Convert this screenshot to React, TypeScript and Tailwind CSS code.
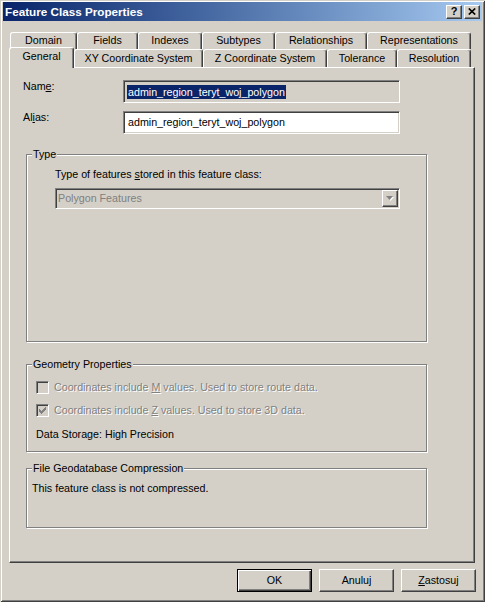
import React from 'react';

const raised =
  'border border-t-white border-l-white border-r-[#404040] border-b-[#404040] shadow-[inset_-1px_-1px_0_#808080]';
const sunken =
  'border border-t-[#808080] border-l-[#808080] border-r-white border-b-white shadow-[inset_1px_1px_0_#404040,inset_-1px_-1px_0_#d4d0c8]';
const dimText = 'text-[#808080] [text-shadow:1px_1px_0_#fff]';

const tabBase =
  'flex shrink-0 items-center justify-center rounded-t-[3px] border-t border-l border-r border-t-white border-l-white border-r-[#404040] bg-[#d4d0c8] shadow-[inset_-1px_0_0_#808080]';

function Tab({ label, className }: { label: React.ReactNode; className: string }) {
  return <div className={`${tabBase} ${className}`}>{label}</div>;
}

function GroupBox({ title, className, children }: { title: string; className: string; children?: React.ReactNode }) {
  return (
    <div className={`ml-[16px] flex w-[401px] shrink-0 flex-col border border-[#808080] shadow-[1px_1px_0_#fff,inset_1px_1px_0_#fff] ${className}`}>
      <span className="-mt-[7px] ml-[5px] self-start bg-[#d4d0c8] px-[1px] leading-[13px]">{title}</span>
      {children}
    </div>
  );
}

function CheckBox({ checked }: { checked?: boolean }) {
  return (
    <div className={`flex h-[13px] w-[13px] shrink-0 items-center justify-center bg-[#d4d0c8] ${sunken}`}>
      {checked && (
        <svg width="7" height="7" viewBox="0 0 7 7">
          <path d="M0 2h1v1h1v1h1v-1h1v-1h1v-1h1v-1h1v3h-1v1h-1v1h-1v1h-1v1h-1v-1h-1v-1h-1z" fill="#808080" />
        </svg>
      )}
    </div>
  );
}

function Button({ children, isDefault }: { children: React.ReactNode; isDefault?: boolean }) {
  return (
    <div
      className={`flex h-[23px] w-[75px] items-center justify-center ${
        isDefault
          ? 'border border-black shadow-[inset_1px_1px_0_#fff,inset_-1px_-1px_0_#404040,inset_-2px_-2px_0_#808080]'
          : raised
      }`}
    >
      {children}
    </div>
  );
}

export default function App() {
  return (
    <div className="h-[602px] w-[485px] bg-[#d4d0c8] font-['Liberation_Sans',Arial,sans-serif] text-[10.7px] leading-[13px] text-black">
      <div className="flex h-[602px] w-[485px] flex-col px-[3px] pt-[2px] shadow-[inset_1px_1px_0_#d4d0c8,inset_-1px_-1px_0_#404040,inset_2px_2px_0_#fff,inset_-2px_-2px_0_#808080]">
        {/* title bar */}
        <div className="flex h-[19px] shrink-0 items-center bg-linear-to-r from-[#0a246a] to-[#a6caf0] pl-[2px] pr-[2px]">
          <span className="text-[11.7px] font-bold leading-[14px] text-white">Feature Class Properties</span>
          <div className="ml-auto flex gap-[2px]">
            <div className={`flex h-[14px] w-[16px] items-center justify-center bg-[#d4d0c8] text-[11px] font-bold leading-[11px] ${raised}`}>?</div>
            <div className={`flex h-[14px] w-[16px] items-center justify-center bg-[#d4d0c8] ${raised}`}>
              <svg width="8" height="7" viewBox="0 0 8 7">
                <path d="M0.8 0.5 L7.2 6.5 M7.2 0.5 L0.8 6.5" stroke="#000" strokeWidth="1.7" />
              </svg>
            </div>
          </div>
        </div>

        {/* tabs */}
        <div className="ml-[7px] mt-[11px] flex h-[17px] shrink-0">
          <Tab label="Domain" className="w-[67px] pb-[1px]" />
          <Tab label="Fields" className="w-[61px] pb-[1px]" />
          <Tab label="Indexes" className="w-[64px] pb-[1px]" />
          <Tab label="Subtypes" className="w-[73px] pb-[1px]" />
          <Tab label="Relationships" className="w-[92px] pb-[1px]" />
          <Tab label="Representations" className="w-[104px] pb-[1px]" />
        </div>
        <div className="ml-[6px] flex h-[18px] shrink-0 items-start">
          <Tab label="General" className="relative z-10 -mt-[2px] h-[21px] w-[65px] pb-[3px]" />
          <Tab label="XY Coordinate System" className="h-[18px] w-[129px]" />
          <Tab label="Z Coordinate System" className="h-[18px] w-[124px]" />
          <Tab label="Tolerance" className="h-[18px] w-[70px]" />
          <Tab label="Resolution" className="h-[18px] w-[74px]" />
        </div>

        {/* panel */}
        <div className="ml-[6px] flex h-[496px] w-[466px] shrink-0 flex-col border border-t-white border-l-white border-r-[#404040] border-b-[#404040] shadow-[inset_-1px_-1px_0_#808080]">
          <div className="mt-[12px] flex items-start pl-[13px]">
            <span className="w-[100px]">
              Nam<span className="underline">e</span>:
            </span>
            <div className={`flex h-[23px] w-[277px] items-center bg-[#d4d0c8] pl-[3px] ${sunken}`}>
              <span className="bg-[#0a246a] px-[1px] leading-[14px] text-white">admin_region_teryt_woj_polygon</span>
            </div>
          </div>
          <div className="mt-[8px] flex items-start pl-[13px]">
            <span className="w-[100px]">
              Al<span className="underline">i</span>as:
            </span>
            <div className={`flex h-[23px] w-[277px] items-center bg-white pl-[4px] ${sunken}`}>
              admin_region_teryt_woj_polygon
            </div>
          </div>

          <GroupBox title="Type" className="mt-[20px] h-[188px]">
            <div className="ml-[28px] mt-[7px]">
              Type of features <span className="underline">s</span>tored in this feature class:
            </div>
            <div className={`ml-[28px] mt-[7px] flex h-[21px] w-[345px] items-center bg-[#d4d0c8] ${sunken}`}>
              <span className="pl-[2px] text-[#808080]">Polygon Features</span>
              <div className={`ml-auto mr-[1px] flex h-[17px] w-[16px] items-center justify-center ${raised}`}>
                <svg width="8" height="5" viewBox="0 0 8 5">
                  <path d="M1 1h7l-3.5 4z" fill="#fff" />
                  <path d="M0 0h7l-3.5 4z" fill="#808080" />
                </svg>
              </div>
            </div>
          </GroupBox>

          <GroupBox title="Geometry Properties" className="mt-[22px] h-[88px]">
            <div className="ml-[9px] mt-[10px] flex items-center gap-[5px]">
              <CheckBox />
              <span className={dimText}>
                Coordinates include <span className="underline">M</span> values. Used to store route data.
              </span>
            </div>
            <div className="ml-[9px] mt-[10px] flex items-center gap-[5px]">
              <CheckBox checked />
              <span className={dimText}>
                Coordinates include <span className="underline">Z</span> values. Used to store 3D data.
              </span>
            </div>
            <div className="ml-[9px] mt-[11px]">Data Storage: High Precision</div>
          </GroupBox>

          <GroupBox title="File Geodatabase Compression" className="mt-[16px] h-[60px]">
            <div className="ml-[5px] mt-[7px]">This feature class is not compressed.</div>
          </GroupBox>
        </div>

        {/* buttons */}
        <div className="mr-[6px] mt-[6px] flex justify-end gap-[7px]">
          <Button isDefault>OK</Button>
          <Button>Anuluj</Button>
          <Button>
            <span>
              <span className="underline">Z</span>astosuj
            </span>
          </Button>
        </div>
      </div>
    </div>
  );
}
